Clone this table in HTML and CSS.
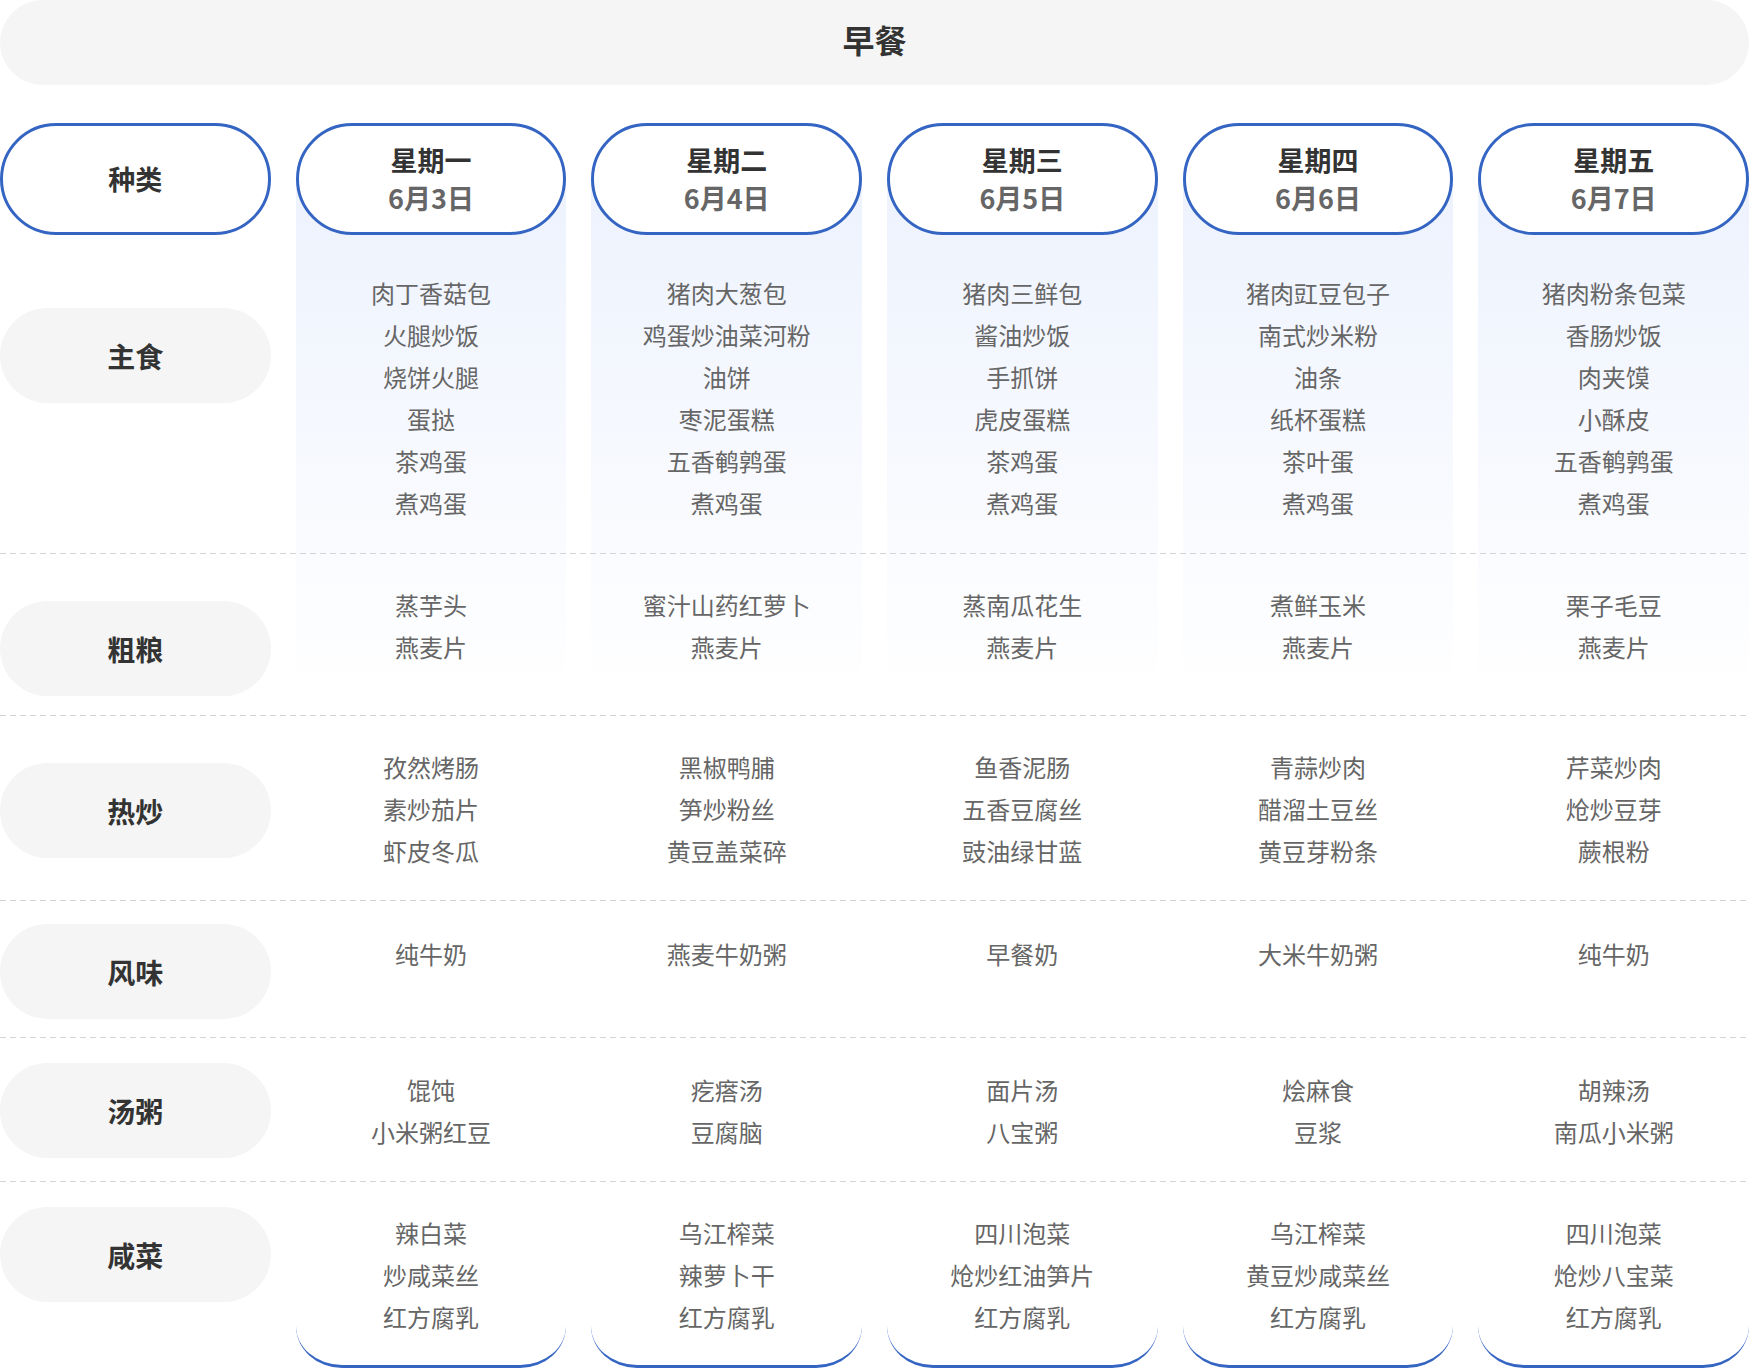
FILE: index.html
```html
<!DOCTYPE html>
<html lang="zh-CN">
<head>
<meta charset="utf-8">
<title>早餐</title>
<link rel="stylesheet" href="styles.css">
</head>
<body>
<div class="page">
  <div class="title">早餐</div>
  <div class="board">
    <div class="layer bg-layer">
      <div></div>
      <div class="col-bg"></div>
      <div class="col-bg"></div>
      <div class="col-bg"></div>
      <div class="col-bg"></div>
      <div class="col-bg"></div>
    </div>
    <div class="layer content">
      <div class="pill"><div class="day">种类</div></div>
      <div class="pill"><div class="day">星期一</div><div class="date">6月3日</div></div>
      <div class="pill"><div class="day">星期二</div><div class="date">6月4日</div></div>
      <div class="pill"><div class="day">星期三</div><div class="date">6月5日</div></div>
      <div class="pill"><div class="day">星期四</div><div class="date">6月6日</div></div>
      <div class="pill"><div class="day">星期五</div><div class="date">6月7日</div></div>

      <div class="label r1">主食</div>
      <div class="items r1"><div>肉丁香菇包</div><div>火腿炒饭</div><div>烧饼火腿</div><div>蛋挞</div><div>茶鸡蛋</div><div>煮鸡蛋</div></div>
      <div class="items r1"><div>猪肉大葱包</div><div>鸡蛋炒油菜河粉</div><div>油饼</div><div>枣泥蛋糕</div><div>五香鹌鹑蛋</div><div>煮鸡蛋</div></div>
      <div class="items r1"><div>猪肉三鲜包</div><div>酱油炒饭</div><div>手抓饼</div><div>虎皮蛋糕</div><div>茶鸡蛋</div><div>煮鸡蛋</div></div>
      <div class="items r1"><div>猪肉豇豆包子</div><div>南式炒米粉</div><div>油条</div><div>纸杯蛋糕</div><div>茶叶蛋</div><div>煮鸡蛋</div></div>
      <div class="items r1"><div>猪肉粉条包菜</div><div>香肠炒饭</div><div>肉夹馍</div><div>小酥皮</div><div>五香鹌鹑蛋</div><div>煮鸡蛋</div></div>
      <div class="sep"></div>

      <div class="label r2">粗粮</div>
      <div class="items r2"><div>蒸芋头</div><div>燕麦片</div></div>
      <div class="items r2"><div>蜜汁山药红萝卜</div><div>燕麦片</div></div>
      <div class="items r2"><div>蒸南瓜花生</div><div>燕麦片</div></div>
      <div class="items r2"><div>煮鲜玉米</div><div>燕麦片</div></div>
      <div class="items r2"><div>栗子毛豆</div><div>燕麦片</div></div>
      <div class="sep"></div>

      <div class="label r3">热炒</div>
      <div class="items r3"><div>孜然烤肠</div><div>素炒茄片</div><div>虾皮冬瓜</div></div>
      <div class="items r3"><div>黑椒鸭脯</div><div>笋炒粉丝</div><div>黄豆盖菜碎</div></div>
      <div class="items r3"><div>鱼香泥肠</div><div>五香豆腐丝</div><div>豉油绿甘蓝</div></div>
      <div class="items r3"><div>青蒜炒肉</div><div>醋溜土豆丝</div><div>黄豆芽粉条</div></div>
      <div class="items r3"><div>芹菜炒肉</div><div>炝炒豆芽</div><div>蕨根粉</div></div>
      <div class="sep"></div>

      <div class="label r4">风味</div>
      <div class="items r4"><div>纯牛奶</div></div>
      <div class="items r4"><div>燕麦牛奶粥</div></div>
      <div class="items r4"><div>早餐奶</div></div>
      <div class="items r4"><div>大米牛奶粥</div></div>
      <div class="items r4"><div>纯牛奶</div></div>
      <div class="sep"></div>

      <div class="label r5">汤粥</div>
      <div class="items r5"><div>馄饨</div><div>小米粥红豆</div></div>
      <div class="items r5"><div>疙瘩汤</div><div>豆腐脑</div></div>
      <div class="items r5"><div>面片汤</div><div>八宝粥</div></div>
      <div class="items r5"><div>烩麻食</div><div>豆浆</div></div>
      <div class="items r5"><div>胡辣汤</div><div>南瓜小米粥</div></div>
      <div class="sep"></div>

      <div class="label r6">咸菜</div>
      <div class="items r6"><div>辣白菜</div><div>炒咸菜丝</div><div>红方腐乳</div></div>
      <div class="items r6"><div>乌江榨菜</div><div>辣萝卜干</div><div>红方腐乳</div></div>
      <div class="items r6"><div>四川泡菜</div><div>炝炒红油笋片</div><div>红方腐乳</div></div>
      <div class="items r6"><div>乌江榨菜</div><div>黄豆炒咸菜丝</div><div>红方腐乳</div></div>
      <div class="items r6"><div>四川泡菜</div><div>炝炒八宝菜</div><div>红方腐乳</div></div>
    </div>
  </div>
</div>
</body>
</html>
```

FILE: styles.css
```css
html, body {
  margin: 0;
  padding: 0;
  background: #fff;
}
body {
  font-family: "Noto Sans CJK SC", "Noto Sans", sans-serif;
  width: 1749px;
  overflow: hidden;
}
.page {
  width: 1749px;
}
.title {
  box-sizing: border-box;
  height: 85px;
  padding-bottom: 7px;
  border-radius: 43px;
  background: #f5f5f5;
  display: flex;
  align-items: center;
  justify-content: center;
  font-size: 32px;
  font-weight: 700;
  color: #333;
}
.board {
  display: grid;
  margin-top: 38px;
}
.layer {
  grid-area: 1 / 1;
}
.bg-layer {
  display: grid;
  grid-template-columns: repeat(6, 1fr);
  column-gap: 25px;
}
.col-bg {
  margin-top: 56px;
  background: linear-gradient(to bottom, #edf2fd 0, #ffffff 520px);
  border-bottom: 3px solid #3565c3;
  border-radius: 0 0 46px 46px / 0 0 42px 42px;
}
.content {
  display: grid;
  grid-template-columns: repeat(6, 1fr);
  column-gap: 25px;
  grid-template-rows: 112px 318px 1px 161px 1px 184px 1px 136px 1px 143px 1px 186px;
}
.pill {
  box-sizing: border-box;
  border: 3px solid #3565c3;
  border-radius: 56px;
  background: #fff;
  display: flex;
  flex-direction: column;
  align-items: center;
  justify-content: center;
}
.day {
  font-size: 27px;
  font-weight: 700;
  line-height: 38px;
  color: #333;
}
.date {
  font-size: 27px;
  font-weight: 700;
  line-height: 38px;
  color: #666;
}
.label {
  align-self: start;
  height: 95px;
  border-radius: 48px;
  background: #f5f5f5;
  display: flex;
  align-items: center;
  justify-content: center;
  font-size: 28px;
  font-weight: 700;
  color: #333;
}
.label.r1 { margin-top: 73px; }
.label.r2 { margin-top: 47px; }
.label.r3 { margin-top: 47px; }
.label.r4 { margin-top: 23px; }
.label.r5 { margin-top: 25px; }
.label.r6 { margin-top: 25px; }
.items {
  text-align: center;
  font-size: 24px;
  line-height: 42px;
  color: #666;
}
.items.r1 { padding-top: 37px; }
.items.r2 { padding-top: 30px; }
.items.r3 { padding-top: 30px; }
.items.r4 { padding-top: 32px; }
.items.r5 { padding-top: 31px; }
.items.r6 { padding-top: 30px; }
.sep {
  grid-column: 1 / -1;
  background: repeating-linear-gradient(to right, #d4d4d4 0, #d4d4d4 6px, transparent 6px, transparent 10px);
}
```
